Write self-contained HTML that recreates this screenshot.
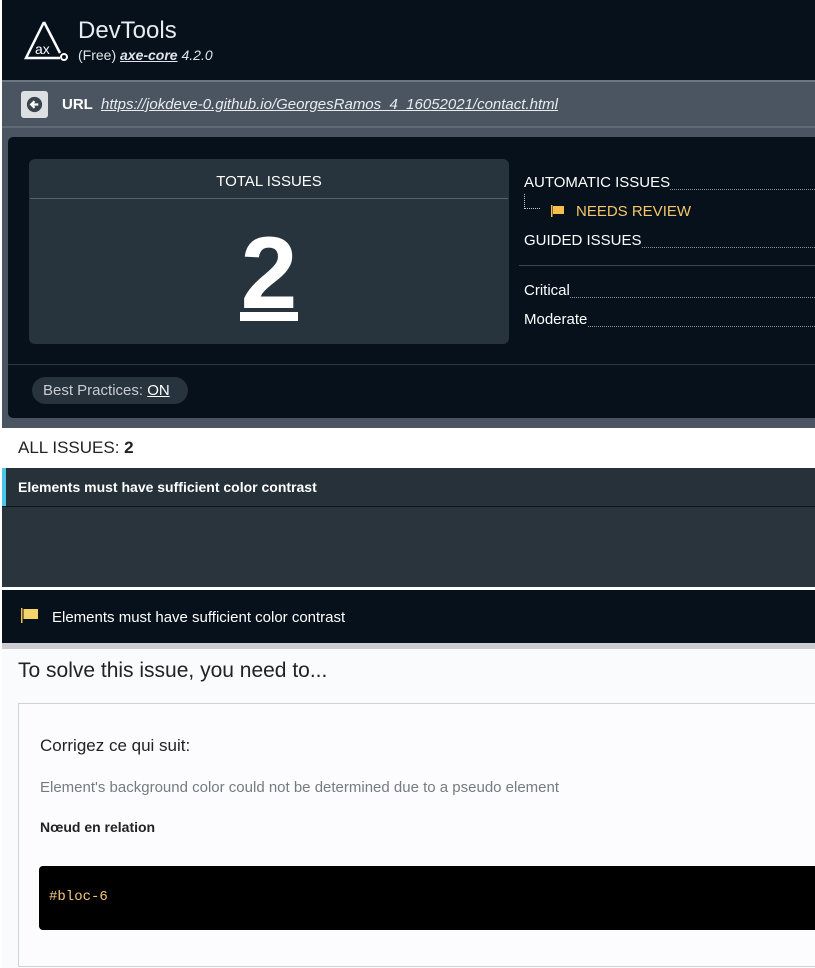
<!DOCTYPE html>
<html><head><meta charset="utf-8"><style>
*{margin:0;padding:0;box-sizing:border-box}
body{width:815px;height:968px;overflow:hidden;background:#fff;font-family:"Liberation Sans",sans-serif;position:relative}
.a{position:absolute}
.dots{position:absolute;border-bottom:1px dotted #8a939b;right:0}
</style></head><body>
<div class="a" style="left:2px;top:0;width:813px;height:80px;background:#06111b"></div>
<svg class="a" style="left:24px;top:20px" width="46" height="42" viewBox="0 0 46 42">
<path d="M20 2 L2 38 L36 38" fill="none" stroke="#fff" stroke-width="2.5"/>
<path d="M20 2 L36 33" fill="none" stroke="#fff" stroke-width="2.5"/>
<circle cx="40" cy="37" r="3" fill="none" stroke="#fff" stroke-width="2"/>
<text x="11" y="34" fill="#fff" font-family="Liberation Sans" font-size="14">ax</text>
</svg>
<div class="a" style="left:78px;top:17px;color:#e8ecef;font-size:24px">DevTools</div>
<div class="a" style="left:78px;top:47px;color:#e0e4e8;font-size:14px">(Free) <b style="text-decoration:underline;font-style:italic">axe-core</b> <i>4.2.0</i></div>
<div class="a" style="left:2px;top:80px;width:813px;height:2px;background:#6b7680"></div>
<div class="a" style="left:2px;top:82px;width:813px;height:346px;background:#4a5561"></div>
<div class="a" style="left:2px;top:126px;width:813px;height:2px;background:#5f6a74"></div>
<div class="a" style="left:21px;top:91px;width:27px;height:27px;background:#dde0e3;border-radius:3px"></div>
<svg class="a" style="left:25px;top:95px" width="19" height="19" viewBox="0 0 20 20"><circle cx="10" cy="10" r="8" fill="#3b444c"/><path d="M14 10H7M10 6.5L6.5 10L10 13.5" stroke="#fff" stroke-width="2.4" fill="none"/></svg>
<div class="a" style="left:62px;top:96px;color:#fff;font-size:15px;font-weight:bold">URL</div>
<div class="a" style="left:101px;top:96px;color:#e8ecef;font-size:15px;font-style:italic;text-decoration:underline">https://jokdeve-0.github.io/GeorgesRamos_4_16052021/contact.html</div>
<div class="a" style="left:8px;top:137px;width:807px;height:281px;background:#06111b;border-radius:5px 0 0 5px"></div>
<div class="a" style="left:29px;top:159px;width:480px;height:185px;background:#27333d;border-radius:6px"></div>
<div class="a" style="left:30px;top:198px;width:478px;height:1px;background:#56636d"></div>
<div class="a" style="left:29px;top:173px;width:480px;text-align:center;color:#fff;font-size:15px">TOTAL ISSUES</div>
<div class="a" style="left:29px;top:218px;width:480px;text-align:center;color:#fff;font-size:102px;line-height:110px;font-weight:bold">2</div>
<div class="a" style="left:240px;top:312px;width:58px;height:9px;background:#fff"></div>
<div class="a" style="left:524px;top:174px;width:291px;height:20px;color:#fff;font-size:15px"><span style="background:#06111b;position:relative;z-index:1">AUTOMATIC ISSUES</span><div class="dots" style="left:0;top:15px"></div></div>
<div class="a" style="left:524px;top:194px;width:16px;height:15px;border-left:1px dotted #ccc;border-bottom:1px dotted #ccc"></div>
<svg class="a" style="left:551px;top:205px" width="14" height="12" viewBox="0 0 14 12"><rect x="0" y="0" width="1.5" height="12" fill="#f5c04a"/><path d="M2 1H13V9H2Z" fill="#f5c04a"/></svg>
<div class="a" style="left:576px;top:203px;color:#f5c76a;font-size:15px">NEEDS REVIEW</div>
<div class="a" style="left:524px;top:232px;width:291px;height:20px;color:#fff;font-size:15px"><span style="background:#06111b;position:relative;z-index:1">GUIDED ISSUES</span><div class="dots" style="left:0;top:15px"></div></div>
<div class="a" style="left:519px;top:265px;width:296px;height:1px;background:#3b4650"></div>
<div class="a" style="left:524px;top:282px;width:291px;height:20px;color:#fff;font-size:15px"><span style="background:#06111b;position:relative;z-index:1">Critical</span><div class="dots" style="left:0;top:15px"></div></div>
<div class="a" style="left:524px;top:311px;width:291px;height:20px;color:#fff;font-size:15px"><span style="background:#06111b;position:relative;z-index:1">Moderate</span><div class="dots" style="left:0;top:15px"></div></div>
<div class="a" style="left:8px;top:364px;width:807px;height:1px;background:#2c3740"></div>
<div class="a" style="left:32px;top:377px;width:156px;height:27px;background:#27333d;border-radius:14px;color:#c8cdd2;font-size:15px;padding:5px 0 0 11px">Best Practices: <b style="color:#fff;font-weight:normal;text-decoration:underline">ON</b></div>
<div class="a" style="left:18px;top:438px;color:#222;font-size:17px">ALL ISSUES: <b>2</b></div>
<div class="a" style="left:2px;top:468px;width:813px;height:119px;background:#2a343d"></div>
<div class="a" style="left:2px;top:468px;width:813px;height:39px;background:#27313a;border-bottom:1px solid #0c151d"></div>
<div class="a" style="left:2px;top:468px;width:4px;height:38px;background:#49c6e8"></div>
<div class="a" style="left:18px;top:479px;color:#fff;font-size:14px;font-weight:bold">Elements must have sufficient color contrast</div>
<div class="a" style="left:2px;top:590px;width:813px;height:53px;background:#06111b"></div>
<svg class="a" style="left:21px;top:608px" width="18" height="15" viewBox="0 0 18 15"><rect x="0" y="0" width="1.5" height="15" fill="#f5c04a"/><path d="M2.5 1H17V11H2.5Z" fill="#f5d56a"/></svg>
<div class="a" style="left:52px;top:609px;color:#fff;font-size:15px">Elements must have sufficient color contrast</div>
<div class="a" style="left:2px;top:643px;width:813px;height:6px;background:#c9cdd1"></div>
<div class="a" style="left:2px;top:649px;width:813px;height:319px;background:#fafbfd"></div>
<div class="a" style="left:18px;top:659px;color:#222;font-size:21px">To solve this issue, you need to...</div>
<div class="a" style="left:18px;top:703px;width:800px;height:264px;background:#fcfcfe;border:1px solid #cfd2d6"></div>
<div class="a" style="left:40px;top:736px;color:#222;font-size:17px">Corrigez ce qui suit:</div>
<div class="a" style="left:40px;top:779px;color:#767b80;font-size:15px">Element's background color could not be determined due to a pseudo element</div>
<div class="a" style="left:40px;top:819px;color:#222;font-size:14px;font-weight:bold">Nœud en relation</div>
<div class="a" style="left:39px;top:866px;width:776px;height:64px;background:#000;border-radius:4px 0 0 4px"></div>
<div class="a" style="left:49px;top:889px;color:#f5c97a;font-family:'Liberation Mono',monospace;font-size:14px">#bloc-6</div>
</body></html>
